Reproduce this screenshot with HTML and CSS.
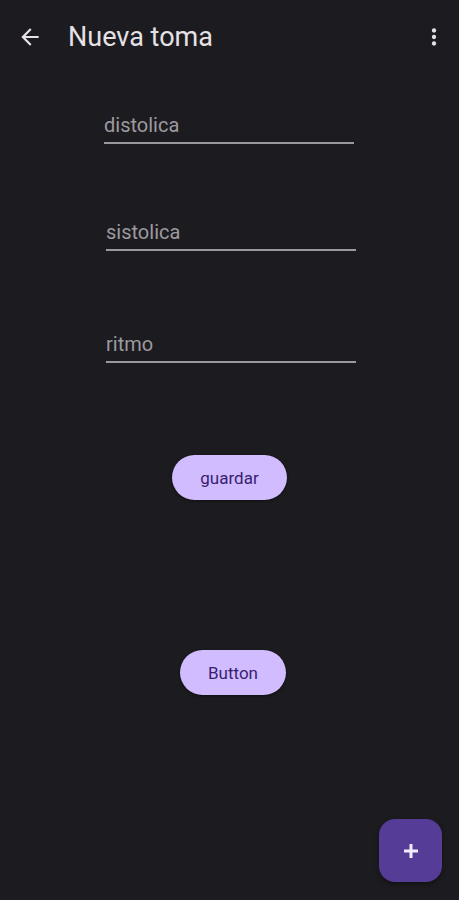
FILE: index.html
```html
<!DOCTYPE html>
<html lang="es">
<head>
  <meta charset="UTF-8">
  <meta name="viewport" content="width=device-width, initial-scale=1.0">
  <title>Nueva toma</title>

  <link rel="stylesheet" href="styles.css">
</head>
<body>

  <header class="app-bar">
    <button class="icon-btn back-btn" aria-label="Atrás">
      <svg viewBox="0 0 24 24" width="26" height="26"><path d="M20 11H7.83l5.59-5.59L12 4l-8 8 8 8 1.41-1.41L7.83 13H20v-2z" fill="currentColor"/></svg>
    </button>
    <h1 class="title">Nueva toma</h1>
    <button class="icon-btn menu-btn" aria-label="Más opciones">
      <svg viewBox="0 0 24 24" width="26" height="26"><circle cx="12" cy="6" r="2" fill="currentColor"/><circle cx="12" cy="12" r="2" fill="currentColor"/><circle cx="12" cy="18" r="2" fill="currentColor"/></svg>
    </button>
  </header>

  <main class="content">
    <div class="fields">
      <label class="field field-first">
        <input type="text" placeholder="distolica">
      </label>
      <label class="field field-second">
        <input type="text" placeholder="sistolica">
      </label>
      <label class="field field-third">
        <input type="text" placeholder="ritmo">
      </label>
    </div>

    <button class="pill-btn save-btn">guardar</button>
    <button class="pill-btn other-btn">Button</button>
  </main>

  <button class="fab" aria-label="Añadir">
    <svg viewBox="0 0 14 14" width="14" height="14"><path d="M7 0v14M0 7h14" stroke="currentColor" stroke-width="3"/></svg>
  </button>

</body>
</html>
```

FILE: styles.css
```css
body {
  margin: 0;
  height: 100vh;
  background-color: #1c1b1f;
  color: #e6e1e5;
  font-family: Roboto, "Noto Sans", sans-serif;
}

.app-bar {
  display: flex;
  align-items: center;
  height: 74px;
  padding: 0 12px 0 17px;
}

.icon-btn {
  display: flex;
  align-items: center;
  justify-content: center;
  background: none;
  border: none;
  padding: 0;
  color: #e6e1e5;
}

.title {
  flex: 1;
  margin: 0 0 0 25px;
  font-size: 27px;
  font-weight: 400;
}

.content {
  display: flex;
  flex-direction: column;
  align-items: center;
}

.fields {
  align-self: flex-start;
  margin-left: 104px;
  display: flex;
  flex-direction: column;
}

.field {
  display: block;
  width: 250px;
  border-bottom: 2px solid #9b999e;
}

.field-first {
  margin-top: 38px;
}

.field-second {
  margin-top: 75px;
  margin-left: 2px;
}

.field-third {
  margin-top: 80px;
  margin-left: 2px;
}

.field input {
  display: block;
  width: 100%;
  box-sizing: border-box;
  background: none;
  border: none;
  outline: none;
  padding: 1px 0 5px 0;
  font-family: inherit;
  font-size: 20px;
  line-height: 24px;
  color: #e6e1e5;
}

.field input::placeholder {
  color: #9c9a9f;
}

.pill-btn {
  height: 45px;
  border: none;
  border-radius: 23px;
  background-color: #d0bcff;
  color: #381e72;
  font-family: inherit;
  font-size: 17px;
  font-weight: 400;
  box-shadow: 0 1px 3px rgba(0, 0, 0, 0.5);
}

.save-btn {
  width: 115px;
  margin-top: 92px;
}

.other-btn {
  width: 106px;
  margin-top: 150px;
  margin-left: 7px;
}

.fab {
  position: fixed;
  right: 17px;
  bottom: 18px;
  width: 63px;
  height: 63px;
  border: none;
  border-radius: 16px;
  background-color: #553c97;
  color: #f3ecff;
  display: flex;
  align-items: center;
  justify-content: center;
  box-shadow: 0 2px 5px rgba(0, 0, 0, 0.4);
}
```
